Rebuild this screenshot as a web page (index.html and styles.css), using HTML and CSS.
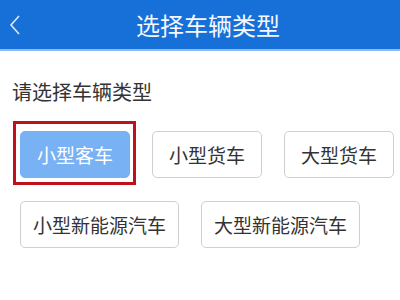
FILE: index.html
```html
<!DOCTYPE html>
<html lang="zh">
<head>
  <meta charset="utf-8">
  <title>选择车辆类型</title>
  <link rel="stylesheet" href="styles.css">
</head>
<body>
  <!-- top bar -->
  <header class="topbar">
    <span class="back">
      <svg width="12" height="20" viewBox="0 0 12 20"><path d="M10 1 L2 10 L10 19" fill="none" stroke="#dce9fb" stroke-width="1.6"/></svg>
    </span>
    <h1 class="title">选择车辆类型</h1>
  </header>

  <section class="content">
    <p class="label">请选择车辆类型</p>
    <div class="types">
      <button class="type selected">小型客车</button>
      <button class="type">小型货车</button>
      <button class="type">大型货车</button>
      <button class="type">小型新能源汽车</button>
      <button class="type">大型新能源汽车</button>
    </div>
  </section>
</body>
</html>
```

FILE: styles.css
```css
body {
  margin: 0;
  padding: 0;
  background-color: #ffffff;
  font-family: "Noto Sans CJK SC", "Noto Sans", sans-serif;
  width: 400px;
  height: 300px;
  overflow: hidden;
}

.topbar {
  position: relative;
  height: 49px;
  background-color: #1670d8;
  border-bottom: 2px solid #8dbdf0;
  display: flex;
  align-items: center;
  justify-content: center;
}

.back {
  position: absolute;
  left: 9px;
  top: 15px;
}

.title {
  margin: 0 0 0 16px;
  font-size: 24px;
  font-weight: normal;
  color: #f4f8fe;
}

.content {
  padding: 0 12px;
}

.label {
  margin: 0;
  padding-top: 28px;
  font-size: 20px;
  line-height: 26px;
  color: #333333;
}

.types {
  display: flex;
  flex-wrap: wrap;
  column-gap: 22px;
  row-gap: 23px;
  padding: 26px 0 0 8px;
  width: 380px;
}

.type {
  position: relative;
  height: 47px;
  min-width: 110px;
  padding: 0 12px;
  font-family: inherit;
  font-size: 19px;
  color: #333333;
  background-color: #ffffff;
  border: 1px solid #cfcfcf;
  border-radius: 5px;
}

.type.selected {
  color: #ffffff;
  background-color: #79b1f5;
  border-color: #79b1f5;
}

/* red highlight frame around chosen one */
.type.selected::after {
  content: "";
  position: absolute;
  left: -8px;
  top: -11px;
  right: -7px;
  bottom: -8px;
  border: 3px solid #c0101a;
}
```
